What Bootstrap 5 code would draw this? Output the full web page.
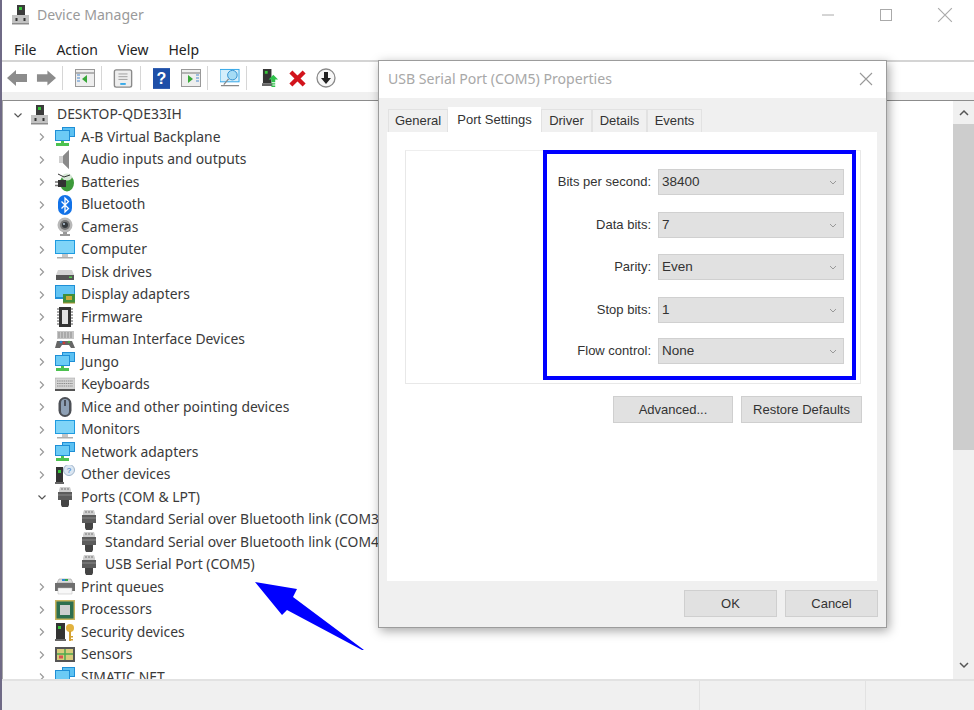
<!doctype html>
<html lang="en">
<head>
<meta charset="utf-8">
<title>Device Manager</title>
<link href="https://cdn.jsdelivr.net/npm/bootstrap@5.3.0/dist/css/bootstrap.min.css" rel="stylesheet">
<style>
html,body{height:710px;overflow:hidden;background:#fff}
body{font-family:"Noto Sans","Open Sans",sans-serif;color:#333;position:relative}
.dm-window{height:710px;border-left:2px solid #6f6a86}
.dm-title{height:30px;padding-left:10px;font-size:14.1px;color:#9a9a9a;flex:none}
.dm-ctrl{gap:40px;padding-right:21px}
.dm-menu{height:32px;padding:8px 0 0 12px;gap:20px;font-size:14px;color:#222;border-bottom:2px solid #d4d4d4;flex:none}
.dm-tools{height:30px;padding:2px 0 0 5px;flex:none}
.dm-sep{width:1px;height:24px;background:#d6d6d6;flex:none}
.tm6{margin-right:6px}.tm7{margin-right:7px}.tm8{margin-right:8px}.tm10{margin-right:10px}.tm11{margin-right:11px}.tm12{margin-right:12px}.tm15{margin-right:15px}
.dm-gutter{height:8px;background:#f0f0f0;flex:none}
.dm-body{height:579px;border-top:1px solid #8c8c8c;border-left:1px solid #a9a9a9;overflow:hidden;flex:none}
.dm-tree{padding:2.5px 0 0;margin:0}
.dm-row{height:22.5px;font-size:13.9px;color:#3a3a3a;white-space:nowrap}
.dm-chev{width:12px;flex:none;margin-right:7px}
.lvl0{padding-left:9px}.lvl1{padding-left:33px}.lvl2{padding-left:76px}
.lvl0 .dm-lab{margin-left:9px}
.lvl1 .dm-lab{margin-left:6px}
.lvl2 .dm-lab{margin-left:6px}
.lvl0 .dm-chev{margin-right:7px}
.dm-scroll{width:21px;background:#f0f0f0;flex:none}
.dm-thumb{height:326px;background:#cdcdcd}
.dm-status{height:31px;background:#f0f0f0;border-top:2px solid #e2e2e2;flex:none}
.dm-cell{border-right:1px solid #e2e2e2}
.dm-cell-a{width:698px}.dm-cell-b{width:166px}
.dlg{position:absolute;left:378px;top:60px;width:509px;height:568px;background:#f0f0f0;border:1px solid #9c9c9c;box-shadow:2px 3px 10px rgba(0,0,0,.35);font-family:"Liberation Sans",Arial,sans-serif;font-size:13px;color:#333}
.dlg-head{height:37px;background:#fff;padding:0 13px 2px 9px;font-family:"Noto Sans",sans-serif;font-size:14.1px;color:#a8a8a8;flex:none}
.dlg-tabs{margin:9px 9px 0 9px;border:0;height:25px;align-items:flex-end;flex:none}
.dlg-tabs .nav-link{height:23px;padding:1px 0 0;text-align:center;font-size:13px;color:#333;background:#f0f0f0;border:1px solid #e2e2e2;border-bottom:0;border-radius:0;margin:0}
.dlg-tabs .nav-link.active{height:25px;padding-top:2px;background:#fff;border-color:#fff;color:#333}
.tab-a{width:60px}.tab-b{width:93px}.tab-c{width:51px}.tab-d{width:55px}
.dlg-panel{margin:0 9px 0 8px;height:449px;background:#fff;padding:18px 16px 0 18px;flex:none}
.dlg-group{height:234px;border:1px solid #e8e8e8;border-top-color:#eee;display:flex}
.dlg-fields{margin-left:137px;width:313px;height:230px;margin-top:-1px;border:4px solid #00f;padding:15px 8px 0 0}
.dlg-field{height:26px;gap:7px;margin-bottom:17px}
.dlg-field:nth-child(2){margin-bottom:16px}
.dlg-field:nth-child(4){margin-bottom:15px}
.dlg-field label{white-space:nowrap;font-size:13px;color:#333;margin-top:-1px}
.dlg-sel{width:186px;height:26px;flex:none;padding:0 0 0 3px;font-family:inherit;font-size:13.5px;line-height:24px;color:#333;background-color:#e1e1e1;border:1px solid #d0d0d0;border-radius:0;background-position:right 6px center;background-size:8px 5px;background-image:url("data:image/svg+xml,%3csvg xmlns='http://www.w3.org/2000/svg' viewBox='0 0 8 5'%3e%3cpath fill='none' stroke='%23999' d='M1 1l3 3 3-3'/%3e%3c/svg%3e")}
.dlg-btn{height:27px;font-size:13px;line-height:1;padding:0;color:#333;background:#e1e1e1;border:1px solid #cfcfcf;border-radius:0}
.dlg-row2{margin-top:12px;gap:8px;margin-right:-1px}
.dlg-foot{gap:8px;margin-top:9px;padding-right:8px}
.dlg-adv{width:120px}.dlg-rest{width:121px}.dlg-ok{width:93px}
.dm-arrow{position:absolute;left:250px;top:578px;width:120px;height:76px}
</style>
</head>
<body>
<svg width="0" height="0" class="d-none" aria-hidden="true">
<defs>
<symbol id="i-pc" viewBox="0 0 17 20"><rect x="5" y="0" width="8" height="10" fill="#3b3b3b"/><rect x="7" y="2" width="3" height="3" fill="#37c63a"/><path d="M0 10h17v9H0z" fill="#c2c2c2"/><path d="M0 18h17v1.500H0z" fill="#8c8c8c"/><rect x="3.500" y="13" width="2" height="3" fill="#333"/><rect x="11.500" y="13" width="2" height="3" fill="#333"/></symbol>
<symbol id="i-net" viewBox="0 0 20 20"><rect x="7" y="0" width="13" height="10" fill="#1f8fd6"/><rect x="8" y="1" width="11" height="8" fill="#5cc1f2"/><rect x="0" y="3" width="15" height="11" fill="#1f8fd6"/><rect x="1" y="4" width="13" height="9" fill="#6ccbf5"/><path d="M6 14h3v2h5v3H1v-3h5z" fill="#4cc24f"/></symbol>
<symbol id="i-spk" viewBox="0 0 20 20"><path d="M4 6h4l6-6v19l-6-6H4z" fill="#a8a8a8"/><path d="M8 6l6-6v19l-6-6z" fill="#8a8a8a"/><path d="M4 6h4v7H4z" fill="#cfcfcf"/></symbol>
<symbol id="i-bat" viewBox="0 0 20 20"><ellipse cx="12" cy="11" rx="7" ry="8.500" fill="#3d9a3a"/><ellipse cx="12" cy="5" rx="5" ry="3.500" fill="#d8e8d8"/><path d="M3 8h8v7H3z" fill="#333"/><path d="M0 10h3M0 13.500h3" stroke="#777" stroke-width="1.300"/><path d="M3 2l6 3 6-2" stroke="#333" fill="none"/></symbol>
<symbol id="i-bt" viewBox="0 0 20 20"><rect x="3" y="0" width="14" height="20" rx="7" fill="#1272e8"/><path d="M6.500 6.500l7 7L10 17V3l3.500 3.500-7 7" fill="none" stroke="#fff" stroke-width="1.300"/></symbol>
<symbol id="i-cam" viewBox="0 0 20 20"><circle cx="10" cy="8" r="7.500" fill="#b8b8b8"/><circle cx="10" cy="8" r="5" fill="#777"/><circle cx="10" cy="8" r="3" fill="#35393d"/><circle cx="9" cy="7" r="1" fill="#bcd"/><path d="M8 15h4v2h3v2H5v-2h3z" fill="#999"/></symbol>
<symbol id="i-mon" viewBox="0 0 20 20"><rect x="0" y="0" width="20" height="14" fill="#1f9be0"/><rect x="1" y="1" width="18" height="12" fill="#7fd4f8"/><path d="M7 14h6v3H7z" fill="#c4c4c4"/><path d="M2 17h16v1.500H2z" fill="#aeaeae"/></symbol>
<symbol id="i-disk" viewBox="0 0 20 20"><path d="M3 8h14l2 5v5H1v-5z" fill="#d4d4d4"/><path d="M1 13h18v5H1z" fill="#555"/><rect x="14" y="14.500" width="3" height="1.500" fill="#52d04e"/></symbol>
<symbol id="i-disp" viewBox="0 0 20 20"><rect x="0" y="0" width="20" height="14" fill="#1f8fd6"/><rect x="1" y="1" width="18" height="11" fill="#62c4f3"/><rect x="8" y="9" width="12" height="9" fill="#3f8f3c"/><rect x="11" y="11" width="6" height="4" fill="#c9a93a"/><path d="M8 18h12" stroke="#a8912c"/></symbol>
<symbol id="i-chip" viewBox="0 0 20 20"><rect x="4" y="0" width="12" height="20" fill="#333"/><rect x="7" y="3" width="6" height="14" fill="#e4e4e4"/><path d="M2 2h2M2 5h2M2 8h2M2 11h2M2 14h2M2 17h2M16 2h2M16 5h2M16 8h2M16 11h2M16 14h2M16 17h2" stroke="#555"/></symbol>
<symbol id="i-hid" viewBox="0 0 20 20"><rect x="2" y="1" width="17" height="8" fill="#c6c6c6"/><path d="M3 3h15M3 5h15M3 7h15" stroke="#8d8d8d" stroke-dasharray="2 1"/><path d="M0 18l2-7h15l3 7h-4l-2-3H7l-2 3z" fill="#666"/><circle cx="6" cy="12" r="1.300" fill="#2a7fd0"/><circle cx="9" cy="13" r="1.300" fill="#cc3a3a"/><circle cx="14" cy="12" r="1.300" fill="#4aa24a"/></symbol>
<symbol id="i-kbd" viewBox="0 0 20 20"><rect x="0" y="3" width="20" height="12" fill="#d5d5d5" stroke="#a0a0a0" stroke-width=".5"/><path d="M2 6h16M2 8.500h16M2 11h16" stroke="#8d8d8d" stroke-dasharray="1.500 .7"/><path d="M0 14h20v2H0z" fill="#555"/></symbol>
<symbol id="i-mouse" viewBox="0 0 20 20"><rect x="3.500" y="0" width="13" height="20" rx="6.500" fill="#4c4f55"/><rect x="6" y="2" width="8" height="16" rx="4" fill="#8ea0b5"/><rect x="9.200" y="3" width="1.600" height="6" fill="#3b3e44"/></symbol>
<symbol id="i-oth" viewBox="0 0 20 20"><rect x="1" y="2" width="7" height="15" fill="#333"/><rect x="3" y="5" width="3" height="3" fill="#37c63a"/><path d="M0 17h9v2H0z" fill="#666"/><circle cx="14" cy="5" r="5.500" fill="#dbe6f2" stroke="#9eb3c9"/><text x="14" y="8" font-size="8" text-anchor="middle" fill="#2a6fc0" font-family="Liberation Sans">?</text></symbol>
<symbol id="i-port" viewBox="0 0 20 20"><path d="M4 3l1-3h10l1 3v3H4z" fill="#cfcfcf"/><path d="M3 5h14v8H3z" fill="#5c5c5c"/><path d="M6 13h8v5l-1 2H7l-1-2z" fill="#444"/><path d="M7 1v2M10 1v2M13 1v2" stroke="#777"/><path d="M3 8h14" stroke="#8a8a8a"/></symbol>
<symbol id="i-print" viewBox="0 0 20 20"><path d="M4 2h12l2 4H2z" fill="#dcdcdc" stroke="#888" stroke-width=".5"/><rect x="7" y="2" width="6" height="2" fill="#36a64a"/><path d="M7 2h3v2H7z" fill="#2a8ad6"/><path d="M0 6h20v8h-3v-3H3v3H0z" fill="#6e6e6e"/><path d="M3 11h14v6H3z" fill="#f8f8f8" stroke="#bbb" stroke-width=".5"/></symbol>
<symbol id="i-cpu" viewBox="0 0 20 20"><rect x="0" y="0" width="20" height="20" fill="#c9b45e"/><rect x="1.500" y="1.500" width="17" height="17" fill="#2f6f4f"/><rect x="5" y="5" width="10" height="10" fill="#cfcfcf"/></symbol>
<symbol id="i-key" viewBox="0 0 20 20"><rect x="1" y="1" width="9" height="16" fill="#333"/><rect x="3" y="4" width="3" height="3" fill="#37c63a"/><path d="M0 17h11v2H0z" fill="#666"/><circle cx="15" cy="6" r="4" fill="#e2b23e"/><path d="M14 9h2v10h-2zM16 14h2v1.500h-2zM16 17h2v1.500h-2z" fill="#d3a030"/></symbol>
<symbol id="i-sens" viewBox="0 0 20 20"><rect x="0" y="2" width="20" height="15" fill="#555"/><rect x="2" y="4" width="16" height="11" fill="#d8cb7a"/><path d="M2 9h16M10 4v11" stroke="#4ea84e" stroke-width="1.500"/><rect x="4" y="10.500" width="4" height="3" fill="#d9534f"/></symbol>
<symbol id="i-c-r" viewBox="0 0 12 12"><path d="M4 2.500L7.500 6 4 9.500" fill="none" stroke="#9a9a9a" stroke-width="1.200"/></symbol>
<symbol id="i-c-d" viewBox="0 0 12 12"><path d="M2.500 4.500L6 8l3.500-3.500" fill="none" stroke="#555" stroke-width="1.200"/></symbol>
</defs>
</svg>

<div class="dm-window d-flex flex-column">
  <div class="dm-title d-flex align-items-center">
    <svg width="17" height="20" class="me-2"><use href="#i-pc"/></svg>
    <span class="flex-grow-1">Device Manager</span>
    <div class="dm-ctrl d-flex align-items-center">
      <svg width="14" height="14" viewBox="0 0 14 14" class="me-1"><path d="M1 7h12" stroke="#aaa"/></svg>
      <svg width="14" height="14" viewBox="0 0 14 14"><rect x="1.500" y="1.500" width="11" height="11" fill="none" stroke="#aaa"/></svg>
      <svg width="16" height="16" class="ms-1" viewBox="0 0 14 14"><path d="M1 1l12 12M13 1L1 13" stroke="#aaa"/></svg>
    </div>
  </div>
  <nav class="dm-menu d-flex align-items-center">
    <span>File</span><span>Action</span><span>View</span><span>Help</span>
  </nav>
  <div class="dm-tools d-flex align-items-center">
    <svg width="21" height="18" viewBox="0 0 21 18" class="tm8"><path d="M0 9l9-8v4h11v8H9v4z" fill="#8c8c8c"/></svg>
    <svg width="20" height="18" viewBox="0 0 21 18" class="tm6"><path d="M21 9l-9-8v4H1v8h11v4z" fill="#8c8c8c"/></svg>
    <span class="dm-sep tm12"></span>
    <svg width="20" height="18" viewBox="0 0 20 18" class="tm6"><rect x=".5" y=".5" width="19" height="17" fill="#eee" stroke="#999"/><path d="M1 4h18" stroke="#777"/><path d="M12 6v8l-5-4z" fill="#38a838"/><path d="M2 6h3M2 9h3M2 12h3" stroke="#4a8ad0"/></svg>
    <span class="dm-sep tm11"></span>
    <svg width="20" height="21" viewBox="0 0 22 22" class="tm7"><rect x="1.500" y="1.500" width="19" height="19" rx="2" fill="#eee" stroke="#8a8a8a" stroke-width="1.500"/><path d="M6 6h10M6 9h10M6 12h10" stroke="#999"/><path d="M8 17h6" stroke="#2fa6e8" stroke-width="2"/></svg>
    <span class="dm-sep tm12"></span>
    <svg width="17" height="21" viewBox="0 0 18 22" class="tm11"><rect width="18" height="22" fill="#1e4fa8"/><text x="9" y="17" font-size="17" font-weight="700" text-anchor="middle" fill="#fff" font-family="Liberation Sans">?</text></svg>
    <svg width="20" height="18" viewBox="0 0 20 18" class="tm6"><rect x=".5" y=".5" width="19" height="17" fill="#eee" stroke="#999"/><path d="M1 4h18" stroke="#777"/><path d="M7 6v8l5-4z" fill="#38a838"/><path d="M15 6h3M15 9h3M15 12h3" stroke="#4a8ad0"/></svg>
    <span class="dm-sep tm12"></span>
    <svg width="20" height="20" viewBox="0 0 21 20" class="tm6"><rect x="0" y="1" width="20" height="13" fill="#d5eefb" stroke="#2fa6e8"/><circle cx="13" cy="7" r="5" fill="#a6dcf5" stroke="#2f8fd0"/><path d="M9 11l-5 6M1 18h19" stroke="#888" stroke-width="1.300"/></svg>
    <span class="dm-sep tm15"></span>
    <svg width="17" height="20" viewBox="0 0 18 21" class="tm10"><rect x="1" y="1" width="9" height="15" fill="#333"/><rect x="3" y="3" width="3" height="3" fill="#37c63a"/><path d="M0 16h11v3H0z" fill="#666"/><path d="M12 7l5 5h-3v3h-4v-3H7z" fill="#2fc24b"/><path d="M10 16h4v1.500h-4zM10 18.500h4V20h-4z" fill="#2fc24b"/></svg>
    <svg width="17" height="17" viewBox="0 0 18 18" class="tm10"><path d="M2 2l14 14M16 2L2 16" stroke="#d2141c" stroke-width="4.500"/></svg>
    <svg width="20" height="20" viewBox="0 0 20 20"><circle cx="10" cy="10" r="9" fill="#f7f7f7" stroke="#8a8a8a" stroke-width="1.300"/><path d="M8 4h4v6h3l-5 6-5-6h3z" fill="#222"/></svg>
  </div>
  <div class="dm-gutter"></div>
  <div class="dm-body d-flex">
    <ul class="dm-tree list-unstyled flex-grow-1">
      <li class="dm-row lvl0 d-flex align-items-center"><svg class="dm-chev" height="12"><use href="#i-c-d"/></svg><svg width="17" height="20"><use href="#i-pc"/></svg><span class="dm-lab">DESKTOP-QDE33IH</span></li>
      <li class="dm-row lvl1 d-flex align-items-center"><svg class="dm-chev" height="12"><use href="#i-c-r"/></svg><svg width="20" height="20"><use href="#i-net"/></svg><span class="dm-lab">A-B Virtual Backplane</span></li>
      <li class="dm-row lvl1 d-flex align-items-center"><svg class="dm-chev" height="12"><use href="#i-c-r"/></svg><svg width="20" height="20"><use href="#i-spk"/></svg><span class="dm-lab">Audio inputs and outputs</span></li>
      <li class="dm-row lvl1 d-flex align-items-center"><svg class="dm-chev" height="12"><use href="#i-c-r"/></svg><svg width="20" height="20"><use href="#i-bat"/></svg><span class="dm-lab">Batteries</span></li>
      <li class="dm-row lvl1 d-flex align-items-center"><svg class="dm-chev" height="12"><use href="#i-c-r"/></svg><svg width="20" height="20"><use href="#i-bt"/></svg><span class="dm-lab">Bluetooth</span></li>
      <li class="dm-row lvl1 d-flex align-items-center"><svg class="dm-chev" height="12"><use href="#i-c-r"/></svg><svg width="20" height="20"><use href="#i-cam"/></svg><span class="dm-lab">Cameras</span></li>
      <li class="dm-row lvl1 d-flex align-items-center"><svg class="dm-chev" height="12"><use href="#i-c-r"/></svg><svg width="20" height="20"><use href="#i-mon"/></svg><span class="dm-lab">Computer</span></li>
      <li class="dm-row lvl1 d-flex align-items-center"><svg class="dm-chev" height="12"><use href="#i-c-r"/></svg><svg width="20" height="20"><use href="#i-disk"/></svg><span class="dm-lab">Disk drives</span></li>
      <li class="dm-row lvl1 d-flex align-items-center"><svg class="dm-chev" height="12"><use href="#i-c-r"/></svg><svg width="20" height="20"><use href="#i-disp"/></svg><span class="dm-lab">Display adapters</span></li>
      <li class="dm-row lvl1 d-flex align-items-center"><svg class="dm-chev" height="12"><use href="#i-c-r"/></svg><svg width="20" height="20"><use href="#i-chip"/></svg><span class="dm-lab">Firmware</span></li>
      <li class="dm-row lvl1 d-flex align-items-center"><svg class="dm-chev" height="12"><use href="#i-c-r"/></svg><svg width="20" height="20"><use href="#i-hid"/></svg><span class="dm-lab">Human Interface Devices</span></li>
      <li class="dm-row lvl1 d-flex align-items-center"><svg class="dm-chev" height="12"><use href="#i-c-r"/></svg><svg width="20" height="20"><use href="#i-net"/></svg><span class="dm-lab">Jungo</span></li>
      <li class="dm-row lvl1 d-flex align-items-center"><svg class="dm-chev" height="12"><use href="#i-c-r"/></svg><svg width="20" height="20"><use href="#i-kbd"/></svg><span class="dm-lab">Keyboards</span></li>
      <li class="dm-row lvl1 d-flex align-items-center"><svg class="dm-chev" height="12"><use href="#i-c-r"/></svg><svg width="20" height="20"><use href="#i-mouse"/></svg><span class="dm-lab">Mice and other pointing devices</span></li>
      <li class="dm-row lvl1 d-flex align-items-center"><svg class="dm-chev" height="12"><use href="#i-c-r"/></svg><svg width="20" height="20"><use href="#i-mon"/></svg><span class="dm-lab">Monitors</span></li>
      <li class="dm-row lvl1 d-flex align-items-center"><svg class="dm-chev" height="12"><use href="#i-c-r"/></svg><svg width="20" height="20"><use href="#i-net"/></svg><span class="dm-lab">Network adapters</span></li>
      <li class="dm-row lvl1 d-flex align-items-center"><svg class="dm-chev" height="12"><use href="#i-c-r"/></svg><svg width="20" height="20"><use href="#i-oth"/></svg><span class="dm-lab">Other devices</span></li>
      <li class="dm-row lvl1 d-flex align-items-center"><svg class="dm-chev" height="12"><use href="#i-c-d"/></svg><svg width="20" height="20"><use href="#i-port"/></svg><span class="dm-lab">Ports (COM &amp; LPT)</span></li>
      <li class="dm-row lvl2 d-flex align-items-center"><svg width="20" height="20"><use href="#i-port"/></svg><span class="dm-lab">Standard Serial over Bluetooth link (COM3)</span></li>
      <li class="dm-row lvl2 d-flex align-items-center"><svg width="20" height="20"><use href="#i-port"/></svg><span class="dm-lab">Standard Serial over Bluetooth link (COM4)</span></li>
      <li class="dm-row lvl2 d-flex align-items-center"><svg width="20" height="20"><use href="#i-port"/></svg><span class="dm-lab">USB Serial Port (COM5)</span></li>
      <li class="dm-row lvl1 d-flex align-items-center"><svg class="dm-chev" height="12"><use href="#i-c-r"/></svg><svg width="20" height="20"><use href="#i-print"/></svg><span class="dm-lab">Print queues</span></li>
      <li class="dm-row lvl1 d-flex align-items-center"><svg class="dm-chev" height="12"><use href="#i-c-r"/></svg><svg width="20" height="20"><use href="#i-cpu"/></svg><span class="dm-lab">Processors</span></li>
      <li class="dm-row lvl1 d-flex align-items-center"><svg class="dm-chev" height="12"><use href="#i-c-r"/></svg><svg width="20" height="20"><use href="#i-key"/></svg><span class="dm-lab">Security devices</span></li>
      <li class="dm-row lvl1 d-flex align-items-center"><svg class="dm-chev" height="12"><use href="#i-c-r"/></svg><svg width="20" height="20"><use href="#i-sens"/></svg><span class="dm-lab">Sensors</span></li>
      <li class="dm-row lvl1 d-flex align-items-center"><svg class="dm-chev" height="12"><use href="#i-c-r"/></svg><svg width="20" height="20"><use href="#i-net"/></svg><span class="dm-lab">SIMATIC NET</span></li>
    </ul>
    <div class="dm-scroll d-flex flex-column align-items-center">
      <svg width="12" height="23" viewBox="0 0 12 23"><path d="M2 14l4-4 4 4" fill="none" stroke="#555" stroke-width="1.500"/></svg>
      <div class="dm-thumb w-100"></div>
      <svg class="mt-auto mb-2" width="12" height="12" viewBox="0 0 12 12"><path d="M2 4l4 4 4-4" fill="none" stroke="#555" stroke-width="1.500"/></svg>
    </div>
  </div>
  <div class="dm-status d-flex">
    <div class="dm-cell dm-cell-a"></div>
    <div class="dm-cell dm-cell-b"></div>
  </div>
</div>

<svg class="dm-arrow" viewBox="250 578 120 76"><polygon points="255,582 297,589 293,597 364,650 362,650 287,610 282,615" fill="#00f"/></svg>

<div class="dlg d-flex flex-column">
  <div class="dlg-head d-flex align-items-center justify-content-between">
    <span>USB Serial Port (COM5) Properties</span>
    <svg width="14" height="14" viewBox="0 0 14 14"><path d="M1 1l12 12M13 1L1 13" stroke="#999" stroke-width="1.100"/></svg>
  </div>
  <ul class="nav nav-tabs flex-nowrap dlg-tabs">
    <li class="nav-item"><a class="nav-link tab-a">General</a></li>
    <li class="nav-item"><a class="nav-link active tab-b">Port Settings</a></li>
    <li class="nav-item"><a class="nav-link tab-c">Driver</a></li>
    <li class="nav-item"><a class="nav-link tab-d">Details</a></li>
    <li class="nav-item"><a class="nav-link tab-d">Events</a></li>
  </ul>
  <div class="dlg-panel">
    <div class="dlg-group">
      <div class="dlg-fields">
        <div class="dlg-field d-flex align-items-center justify-content-end"><label>Bits per second:</label><select class="form-select dlg-sel"><option>38400</option></select></div>
        <div class="dlg-field d-flex align-items-center justify-content-end"><label>Data bits:</label><select class="form-select dlg-sel"><option>7</option></select></div>
        <div class="dlg-field d-flex align-items-center justify-content-end"><label>Parity:</label><select class="form-select dlg-sel"><option>Even</option></select></div>
        <div class="dlg-field d-flex align-items-center justify-content-end"><label>Stop bits:</label><select class="form-select dlg-sel"><option>1</option></select></div>
        <div class="dlg-field d-flex align-items-center justify-content-end"><label>Flow control:</label><select class="form-select dlg-sel"><option>None</option></select></div>
      </div>
    </div>
    <div class="dlg-row2 d-flex justify-content-end">
      <button class="btn dlg-btn dlg-adv" type="button">Advanced...</button>
      <button class="btn dlg-btn dlg-rest" type="button">Restore Defaults</button>
    </div>
  </div>
  <div class="dlg-foot d-flex justify-content-end">
    <button class="btn dlg-btn dlg-ok" type="button">OK</button>
    <button class="btn dlg-btn dlg-ok" type="button">Cancel</button>
  </div>
</div>
</body>
</html>
